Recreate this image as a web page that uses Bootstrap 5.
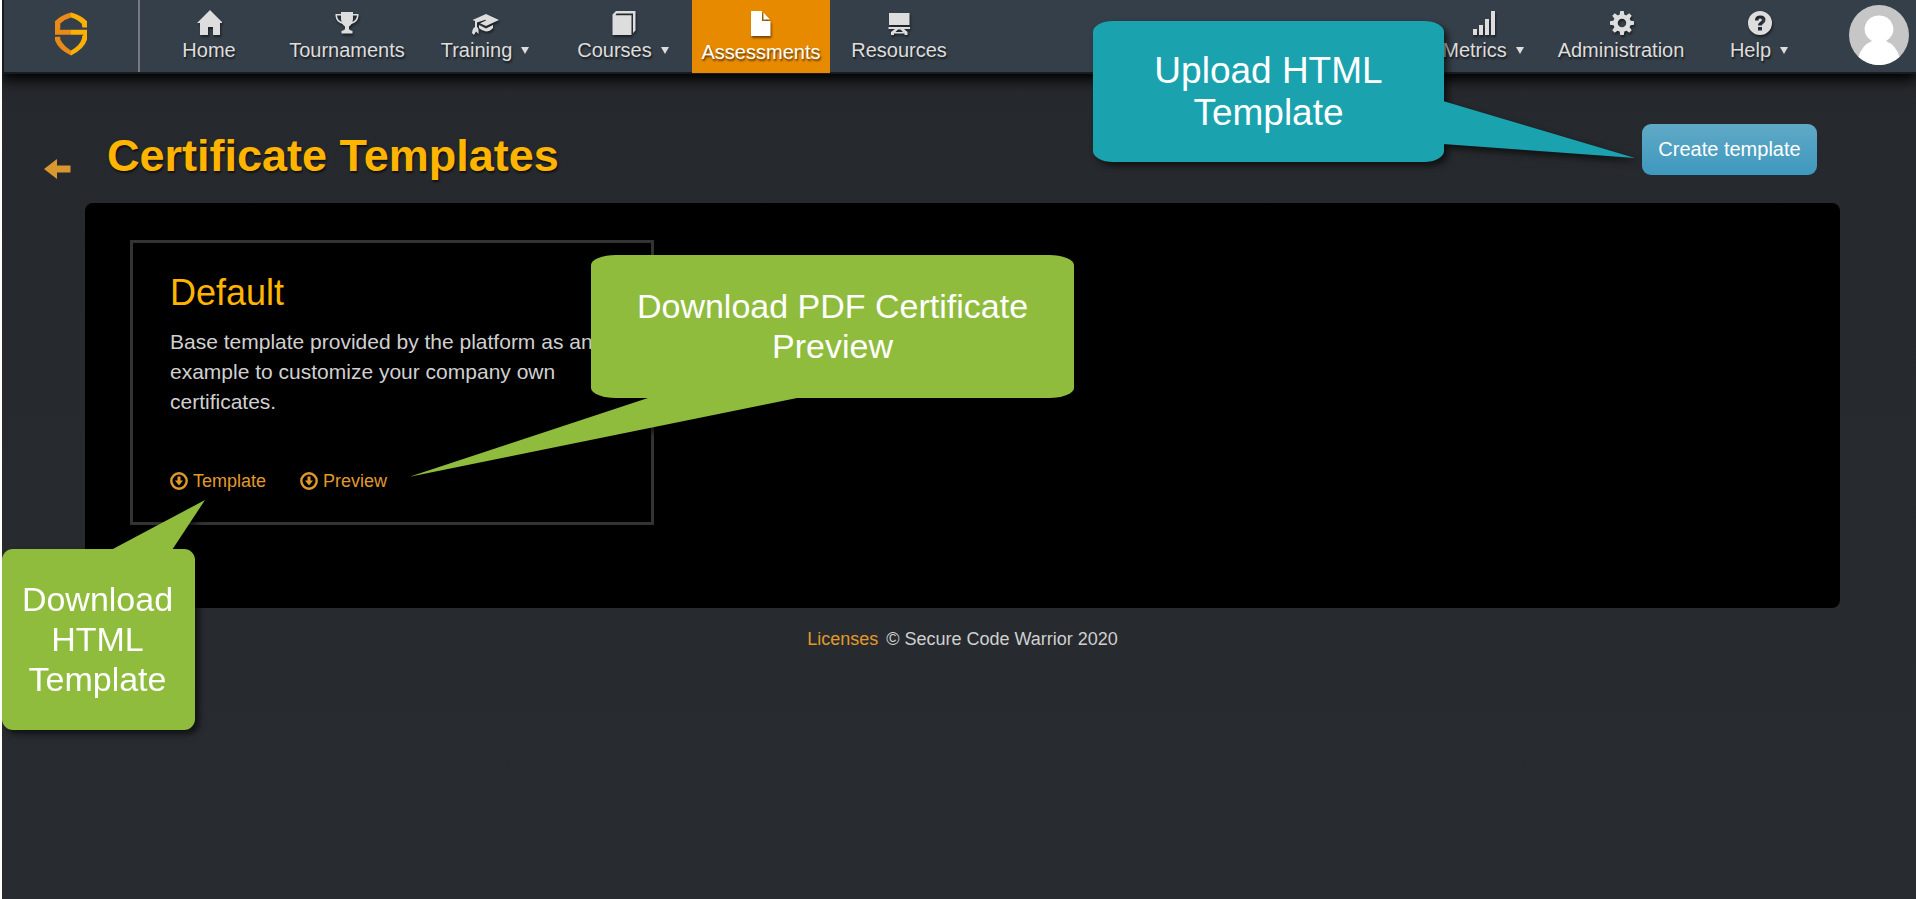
<!DOCTYPE html>
<html lang="en">
<head>
<meta charset="utf-8">
<meta name="viewport" content="width=device-width, initial-scale=1">
<title>Certificate Templates</title>
<link rel="stylesheet" href="https://cdn.jsdelivr.net/npm/bootstrap@5.3.0/dist/css/bootstrap.min.css">
<style>
  body { font-family: "Liberation Sans", Arial, sans-serif; background: linear-gradient(#25282c, #282c30); color: #d0d0d0; border-left: 2px solid #fff; }
  a { color: #e09a2b; text-decoration: none; }
  a:hover { color: #ffb400; }

  .topbar { background: #353f49; border-bottom: 2px solid #181b20; border-left: 2px solid #181b20; box-shadow: 0 6px 12px #000; height: 74px; }
  .logo-cell { width: 136px; border-right: 2px solid #77797c; }
  .main-item { width: 138px; padding: 10px 0 0; color: #ddd; font-size: 20px; line-height: 24px; text-shadow: 1px 2px 2px rgba(0,0,0,.6); white-space: nowrap; }
  .main-item svg { display: block; margin: 0 auto 2px; fill: currentColor; filter: drop-shadow(1px 2px 1px rgba(0,0,0,.5)); }
  .main-item:hover { color: #fff; }
  .main-item.active { background: #e88a00; color: #fff; padding-top: 11px; height: 73px; }
  .main-item.active svg { margin-bottom: 3px; }
  .caret::after { content: ""; display: inline-block; margin-left: 9px; vertical-align: 3px; border: 4px solid transparent; border-top: 7px solid; border-bottom: 0; }
  .avatar-cell { width: 88px; padding: 5px 7px 0 0; }

  .page-head { padding: 50px 99px 0 42px; margin-bottom: 22px; gap: 36px; }
  .page-title { font-size: 45px; font-weight: 700; line-height: 50px; color: #ffb400; text-shadow: 1px 2px 2px rgba(0,0,0,.6); }
  .create-wrap { height: 57px; }
  .btn-create { width: 175px; height: 51px; font-size: 20px; line-height: 24px; color: #fff; padding: 0 0 2px; border: 0; border-radius: 9px; background: linear-gradient(#60a9c6, #3e98be); }
  .btn-create:hover { color: #fff; background: #3e98be; }

  .panel { margin: 0 76px 0 83px; padding: 37px 45px 83px; background: #000; border-radius: 8px; }
  .template-box { max-width: 524px; border: 3px solid #333; padding: 30px 30px 29px 37px; }
  .template-box h2 { font-size: 36px; line-height: 40px; color: #ffb400; margin-bottom: 14px; }
  .template-box p { font-size: 21px; line-height: 30px; margin-bottom: 52px; }
  .downloads { font-size: 18px; line-height: 24px; gap: 34px; }
  .downloads a { gap: 5px; }
  .site-foot { margin: 19px 76px 0 83px; font-size: 18px; line-height: 24px; }

  .callout { z-index: 5; color: #fff; text-align: center; background: var(--tone); filter: drop-shadow(4px 4px 3px rgba(0,0,0,.6)); }
  .callout svg { position: absolute; fill: var(--tone); }
  .callout-upload { --tone: #1aa3af; width: 351px; right: 373px; top: -103px; padding: 29px 50px 28px; font-size: 37px; line-height: 42px; border-radius: 20px / 11px; }
  .callout-upload svg { left: 350px; top: 80px; }
  .callout-preview { --tone: #90bc3e; width: 483px; left: 458px; top: 12px; padding: 31px 40px 32px; font-size: 34px; line-height: 40px; border-radius: 25px / 10px; }
  .callout-preview svg { left: -180px; top: 142px; }
  .callout-html { --tone: #90bc3e; width: 193px; left: -131px; top: 306px; padding: 30px 18px 31px 16px; font-size: 34px; line-height: 40px; border-radius: 11px; }
  .callout-html svg { left: 109px; top: -49px; }
</style>
</head>
<body class="min-vh-100">

<header>
  <nav class="topbar d-flex align-items-start" aria-label="Main">
    <a href="#" class="logo-cell h-100 d-flex justify-content-center flex-shrink-0" aria-label="Secure Code Warrior">
      <svg class="mt-2 pt-1" width="32" height="48" viewBox="164 36 97 130">
        <path fill="#ea8b18" d="M212.500 36Q182 44 164 62V103H212.500V88H178L180 84V69Q194 56 212.500 51ZM164 109H180V118Q192 140 212.500 151V166Q174 148 164 120Z"/>
        <path fill="#fbb104" d="M212.500 36Q243 44 261 62V81H247L245 70Q232 56 212.500 51ZM212.500 88H261V118Q252 148 212.500 166V151Q240 136 246 114V108L251 103H212.500Z"/>
      </svg>
    </a>
    <a href="#" class="main-item text-center">
      <svg width="26" height="26" viewBox="0 0 26 26"><path d="M14 0L27 13H24V25H17V17H12V25H4V13H1Z"/></svg>Home</a>
    <a href="#" class="main-item text-center">
      <svg width="26" height="26" viewBox="0 0 26 26"><path fill-rule="evenodd" d="M7 2H19V4H24.500V6Q24 12 17.500 14Q16 16 15 16.500V19Q15 20 18.500 21V23.500H7.500V21Q11 20 11 19V16.500Q10 16 8.500 14Q2 12 1.500 6V4H7ZM3 5.500Q3.500 10 7.500 12Q6.800 9 7 5.500ZM23 5.500H19Q19.200 9 18.500 12Q22.500 10 23 5.500Z"/></svg>Tournaments</a>
    <a href="#" class="main-item text-center"><svg width="28" height="26" viewBox="0 0 28 26"><path d="M1.500 10L15 4L28 10L15 16L9 13.200L15 10.600L14.500 9.800L6 12.500V17Q8 18 7.500 24L5 21.500L3 25L1 23Q1.500 18 4 17V11ZM8 15L15 18.500L22 15V18Q19 21.500 15 21.500Q11 21 8 18Z"/></svg><span class="caret">Training</span></a>
    <a href="#" class="main-item text-center"><svg width="26" height="26" viewBox="0 0 26 26"><path d="M2.500 4.500L6 1H25.500V20.500L23 23V3.500H6.500L5.500 5.200H21.500V25H2.500Z"/></svg><span class="caret">Courses</span></a>
    <a href="#" class="main-item active text-center" aria-current="page">
      <svg width="26" height="26" viewBox="0 0 26 26"><path d="M3 0H14V10H22.500V25H3ZM15.500 1.500L22 8.500H15.500Z"/></svg>Assessments</a>
    <a href="#" class="main-item text-center">
      <svg width="26" height="26" viewBox="0 0 26 26"><path d="M3 3H23.500V15H3ZM2.500 17H24V19H18L21.500 22V25H18.500V23.500H8V25H5V22L9 19H2.500ZM12 19.500L9.500 22H17L14.500 19.500Z"/></svg>Resources</a>
    <a href="#" class="main-item text-center ms-auto"><svg width="26" height="26" viewBox="0 0 26 26"><path d="M3 19H7V25H3ZM9 15H13V25H9ZM15 9H19V25H15ZM21 1H25V25H21Z"/></svg><span class="caret">Metrics</span></a>
    <a href="#" class="main-item text-center">
      <svg width="26" height="26" viewBox="0 0 26 26"><g transform="translate(14 13)"><circle r="6.500" fill="none" stroke="currentColor" stroke-width="4.500"/><g id="teeth"><path d="M-2.500-7.500L-1.800-12H1.800L2.500-7.500ZM-2.500 7.500L-1.800 12H1.800L2.500 7.500ZM-7.500-2.500L-12-1.800V1.800L-7.500 2.500ZM7.500-2.500L12-1.800V1.800L7.500 2.500Z"/></g><use href="#teeth" transform="rotate(45)"/></g></svg>Administration</a>
    <a href="#" class="main-item text-center"><svg width="28" height="26" viewBox="-2 0 28 26"><path fill-rule="evenodd" d="M13 1A12 12 0 1 1 13 25A12 12 0 1 1 13 1ZM8 10.500H11.500Q11.500 8.500 13 8.500Q14.800 8.500 14.800 10Q14.800 11 13 12Q11 13 11 15.500H15Q15 14.500 16.500 13.500Q18.500 12 18.500 10Q18.500 5.500 13.300 5.500Q8 5.500 8 10.500ZM11 17V20.500H15V17Z"/></svg><span class="caret">Help</span></a>
    <a href="#" class="avatar-cell d-flex justify-content-end flex-shrink-0" aria-label="Profile">
      <svg width="60" height="60" viewBox="0 0 60 60"><circle cx="30" cy="30" r="30" fill="#c6c6c6"/><path fill="#fff" d="M30 10.500A13.500 13.500 0 0 1 37 36Q47 40 50.500 52A30 30 0 0 1 9.500 52Q13 40 23 36A13.500 13.500 0 0 1 30 10.500Z"/></svg>
    </a>
  </nav>
</header>

<main>
  <div class="page-head d-flex align-items-end">
    <a href="#" class="d-flex" aria-label="Back"><svg width="27" height="23" viewBox="0 0 27 23"><path fill="#d8972f" d="M0 11L13 1V7.500H26.500V14.500H13V21Z"/></svg></a>
    <h1 class="page-title mb-0">Certificate Templates</h1>
    <div class="create-wrap position-relative ms-auto">
      <button type="button" class="btn btn-create">Create template</button>
      <div class="callout callout-upload position-absolute">
        <svg width="192" height="58" viewBox="0 0 192 58"><path d="M0 0L192 57L0 43Z"/></svg>
        Upload HTML Template
      </div>
    </div>
  </div>

  <section class="panel">
    <article class="template-box position-relative">
      <h2>Default</h2>
      <p>Base template provided by the platform as an example to customize your company own certificates.</p>
      <div class="downloads d-flex">
        <a href="#" class="d-flex align-items-center"><svg width="18" height="18" viewBox="0 0 18 18"><circle cx="9" cy="9" r="7.700" fill="none" stroke="currentColor" stroke-width="2.400"/><path fill="currentColor" d="M7.500 4.500H10.500V8.500H13L9 13.500L5 8.500H7.500Z"/></svg>Template</a>
        <a href="#" class="d-flex align-items-center"><svg width="18" height="18" viewBox="0 0 18 18"><circle cx="9" cy="9" r="7.700" fill="none" stroke="currentColor" stroke-width="2.400"/><path fill="currentColor" d="M7.500 4.500H10.500V8.500H13L9 13.500L5 8.500H7.500Z"/></svg>Preview</a>
      </div>
      <div class="callout callout-preview position-absolute">
        <svg width="392" height="80" viewBox="0 0 392 80"><path d="M-2 80L240 0H391Z"/></svg>
        Download PDF Certificate Preview
      </div>
      <div class="callout callout-html position-absolute">
        <svg width="95" height="50" viewBox="0 0 95 50"><path d="M0 50L94 0L61 50Z"/></svg>
        Download HTML Template
      </div>
    </article>
  </section>
</main>

<footer class="site-foot text-center"><a href="#" class="me-2">Licenses</a>© Secure Code Warrior 2020</footer>

<script src="https://cdn.jsdelivr.net/npm/bootstrap@5.3.0/dist/js/bootstrap.bundle.min.js"></script>
</body>
</html>
